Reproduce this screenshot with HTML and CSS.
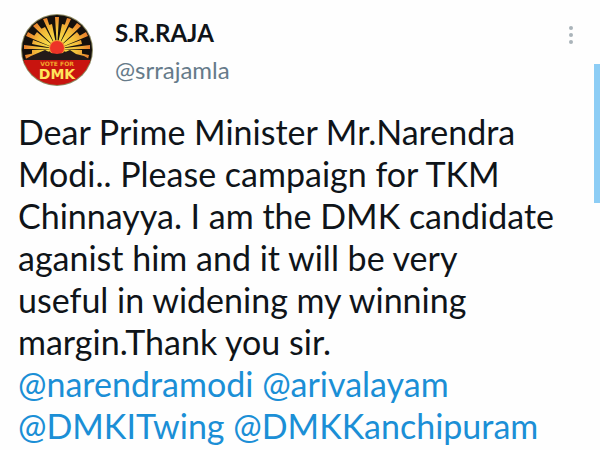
FILE: index.html
```html
<!DOCTYPE html>
<html lang="en">
<head>
  <meta charset="UTF-8">
  <meta name="viewport" content="width=device-width, initial-scale=1.0">
  <title>S.R.RAJA</title>
  <link rel="stylesheet" href="styles.css">
</head>
<body>
  <article class="tweet">
    <header class="tweet-header">
      <svg class="avatar" viewBox="0 0 74 74" aria-hidden="true">
        <defs>
          <clipPath id="disc"><circle cx="37" cy="37" r="35"/></clipPath>
          <radialGradient id="glow" gradientUnits="userSpaceOnUse" cx="37" cy="35" r="34">
            <stop offset="0.2" stop-color="#f8e04a"/>
            <stop offset="0.6" stop-color="#f3bd3a"/>
            <stop offset="1" stop-color="#e8792b"/>
          </radialGradient>
        </defs>
        <circle cx="37" cy="37" r="36" fill="#8d8a62"/>
        <g clip-path="url(#disc)">
          <rect width="74" height="48" fill="#15100c"/>
          <path fill="url(#glow)" d="M37 36L35 4h4zM37 36L42 11l4 1zM37 36L29 12l3-1zM37 36L47 5l4 1zM37 36L23 6l4-1zM37 36L49 14l4 2zM37 36L21 16l4-2zM37 36L57 10l4 3zM37 36L13 13l4-3zM37 36L57 19l3 4zM37 36L14 23l3-4zM37 36L66 19l2 4zM37 36L6 23l2-4zM37 36L61 27l1 4zM37 36L12 31l1-4zM37 36L70 32v4zM37 36L4 36v-4zM37 36L62 37v4zM37 36L12 41v-4zM37 36L69 42l-1 4zM37 36L6 46l-1-4z"/>
          <circle cx="37" cy="35" r="8" fill="#f39a36"/>
          <circle cx="37" cy="35" r="7" fill="#ed3327"/>
          <path fill="#241a19" d="M2 48l9-5 7-3 7-3 6 3 6 1 6-1 7-3 6 4 8 2 9 5v2H2z"/>
          <rect y="47" width="74" height="27" fill="#c8140f"/>
          <text class="logo-small" x="37" y="53" text-anchor="middle">VOTE FOR</text>
          <text class="logo-large" x="37" y="66" text-anchor="middle">DMK</text>
        </g>
      </svg>
      <div class="author">
        <h1 class="name">S.R.RAJA</h1>
        <a class="handle" href="#">@srrajamla</a>
      </div>
      <button class="more" type="button" aria-label="More">
        <svg width="6" height="20" viewBox="0 0 6 20" fill="#aab4ba" aria-hidden="true">
          <circle cx="3" cy="3" r="2"/>
          <circle cx="3" cy="10" r="2"/>
          <circle cx="3" cy="17" r="2"/>
        </svg>
      </button>
    </header>
    <p class="tweet-text">
      Dear Prime Minister Mr.Narendra Modi.. Please campaign for TKM Chinnayya. I am the DMK candidate aganist him and it will be very<br>
      useful in widening my winning margin.Thank you sir.<br>
      <a href="#">@narendramodi</a> <a href="#">@arivalayam</a>
      <a href="#">@DMKITwing</a> <a href="#">@DMKKanchipuram</a>
    </p>
    <div class="scroll-thumb"></div>
  </article>
</body>
</html>
```
FILE: styles.css
```css
* {
  margin: 0;
  padding: 0;
  box-sizing: border-box;
}

body {
  background: #fefefe;
  color: #0f1419;
  font-family: Lato, sans-serif;
}

a {
  color: #1b8fd6;
  text-decoration: none;
}

.tweet {
  position: relative;
  padding: 13px 24px 0 18px;
}

.tweet-header {
  display: flex;
  align-items: flex-start;
}

.avatar {
  width: 74px;
  height: 74px;
  margin-left: 2px;
}

.author {
  flex: 1;
  margin-left: 21px;
}

.name {
  font-size: 24px;
  font-weight: 700;
  line-height: 40px;
}

.author .handle {
  display: block;
  color: #667b8a;
  font-size: 24px;
  line-height: 34px;
}

.more {
  margin-top: 12px;
  padding: 0 2px;
  border: none;
  background: none;
  line-height: 0;
  cursor: pointer;
}

.tweet-text {
  padding: 24px 16px 0 0;
  font-size: 34px;
  line-height: 42px;
}

.scroll-thumb {
  position: absolute;
  top: 64px;
  right: 0;
  width: 6px;
  height: 139px;
  background: #8dcdf5;
}

.logo-small,
.logo-large {
  font-family: 'DejaVu Sans', sans-serif;
  font-weight: 700;
}

.logo-small {
  font-size: 6px;
  fill: #f3a52c;
}

.logo-large {
  font-size: 14px;
  fill: #ffe45c;
}
```
